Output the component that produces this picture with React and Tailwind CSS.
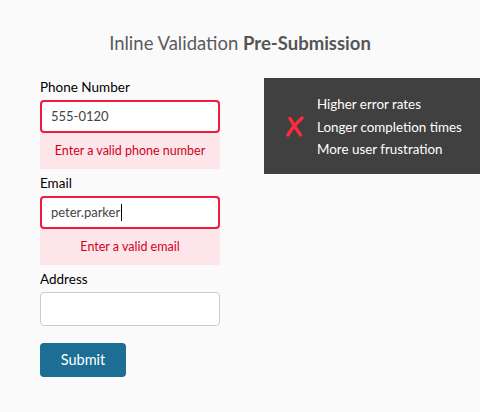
import React from "react";

const Field = ({ label, value, error, caret, tall }) => (
  <div>
    <label className="block text-[13.5px] leading-[18px] text-black">{label}</label>
    <div
      className={
        "mt-[4px] w-[180px] rounded-[4px] bg-white flex items-center px-[9px] text-[13px] text-[#444] " +
        (tall ? "h-[34px] " : "h-[33px] ") +
        (error ? "border-2 border-[#f0193f]" : "border border-[#cccccc]")
      }
    >
      {value}
      {caret && <span className="ml-[1px] inline-block h-[17px] w-[1px] bg-black" />}
    </div>
    {error && (
      <div className="h-[36px] w-[180px] bg-[#fde6ea] flex items-center justify-center text-[12.5px] text-[#d0021b]">
        {error}
      </div>
    )}
  </div>
);

const App = () => {
  return (
    <div
      className="h-[412px] w-[480px] bg-[#fafafa] overflow-hidden"
      style={{ fontFamily: "Lato, 'Open Sans', sans-serif" }}
    >
      <h1 className="pt-[31px] text-center text-[18.5px] leading-[24px] text-[#5a5a5a]">
        Inline Validation <span className="font-bold text-[#555]">Pre-Submission</span>
      </h1>
      <div className="mt-[23px] flex">
        <div className="ml-[40px] flex flex-col gap-[5px]">
          <Field label="Phone Number" value="555-0120" error="Enter a valid phone number" />
          <Field label="Email" value="peter.parker" error="Enter a valid email" caret />
          <Field label="Address" value="" tall />
          <button className="mt-[12px] h-[34px] w-[86px] rounded-[4px] bg-[#1d6e94] text-[14.5px] text-white">
            Submit
          </button>
        </div>
        <div className="ml-[44px] h-[96px] flex-1 bg-[#404040] flex items-center">
          <svg className="ml-[22px] mr-[13px]" width="18" height="21" viewBox="0 0 18 21">
            <path d="M4 2.5 C7 8 10 13 14.5 19" stroke="#ff2a3c" strokeWidth="3.4" strokeLinecap="round" fill="none" />
            <path d="M16 2 C11 6.5 5.5 12.5 2 19" stroke="#ff2a3c" strokeWidth="3.4" strokeLinecap="round" fill="none" />
          </svg>
          <ul className="pt-[2px] text-[13.4px] leading-[22.5px] text-white">
            <li>Higher error rates</li>
            <li>Longer completion times</li>
            <li>More user frustration</li>
          </ul>
        </div>
      </div>
    </div>
  );
};

export default App;
